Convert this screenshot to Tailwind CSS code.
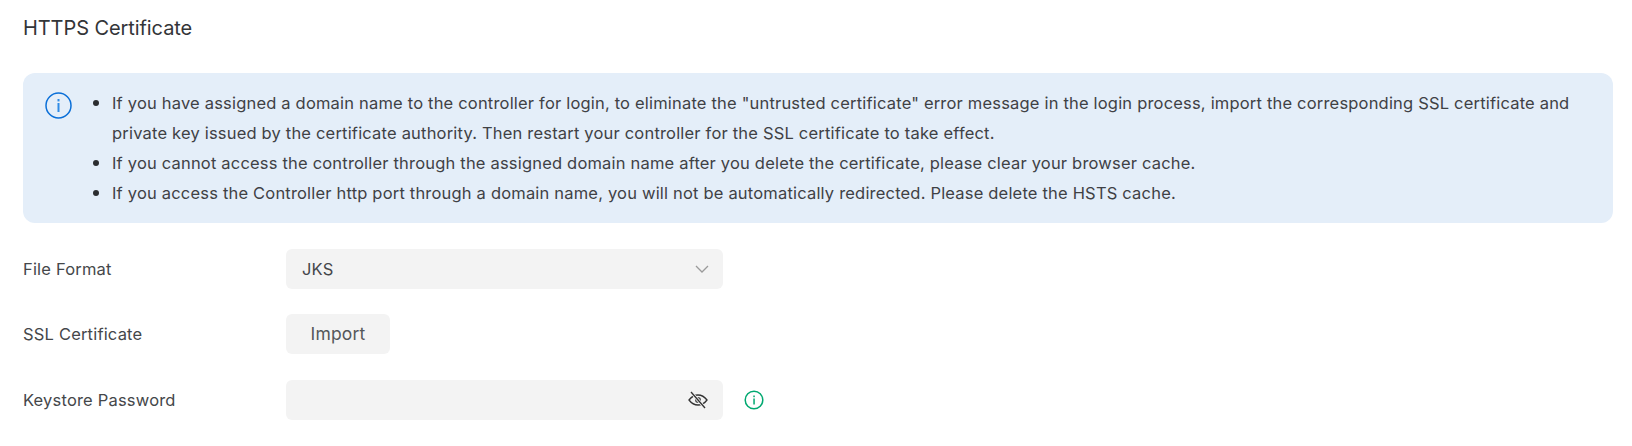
<!DOCTYPE html>
<html lang="en">
<head>
    <meta charset="UTF-8" />
    <title>HTTPS Certificate</title>
    <script src="https://cdn.jsdelivr.net/npm/@tailwindcss/browser@4"></script>
</head>
<body class="bg-white font-['Inter',sans-serif] text-[#45474a]">
    <div class="pl-[23px] pr-[19px]">
        <h2 class="h-[73px] pt-[14px] text-[20px] leading-[28px] font-normal text-[#333538] tracking-[-0.08px]">HTTPS Certificate</h2>

        <div class="flex h-[150px] rounded-[12px] bg-[#e4eef9] pt-[15px] pl-[22px]">
            <svg class="mt-[4px] shrink-0" width="27" height="27" viewBox="0 0 27 27" fill="none">
                <circle cx="13.500" cy="13.500" r="12.500" stroke="#0a6fd8" stroke-width="1.500"/>
                <rect x="12.500" y="7" width="2" height="2.400" fill="#2f8be6"/>
                <rect x="12.500" y="11" width="2" height="9" fill="#2f8be6"/>
            </svg>
            <ul class="ml-[40px] text-[16.5px] leading-[30px] tracking-[0.19px] text-[#3f4145]">
                <li class="relative before:absolute before:left-[-19px] before:top-[12px] before:size-[6px] before:rounded-full before:bg-[#2b2d30]">If you have assigned a domain name to the controller for login, to eliminate the "untrusted certificate" error message in the login process, import the corresponding SSL certificate and<br />private key issued by the certificate authority. Then restart your controller for the SSL certificate to take effect.</li>
                <li class="relative before:absolute before:left-[-19px] before:top-[12px] before:size-[6px] before:rounded-full before:bg-[#2b2d30]">If you cannot access the controller through the assigned domain name after you delete the certificate, please clear your browser cache.</li>
                <li class="relative before:absolute before:left-[-19px] before:top-[12px] before:size-[6px] before:rounded-full before:bg-[#2b2d30]">If you access the Controller http port through a domain name, you will not be automatically redirected. Please delete the HSTS cache.</li>
            </ul>
        </div>

        <div class="mt-[26px] flex flex-col text-[16.5px] tracking-[0.19px]">
            <div class="flex h-[40px] items-center">
                <label class="w-[263px]">File Format</label>
                <div class="flex h-[40px] w-[437px] items-center justify-between rounded-[6px] bg-[#f3f3f3] pl-[16px] pr-[14px]">
                    <span>JKS</span>
                    <svg width="14" height="8" viewBox="0 0 14 8" fill="none"><path d="M1 1l6 6 6-6" stroke="#9a9a9a" stroke-width="1.300"/></svg>
                </div>
            </div>
            <div class="mt-[25px] flex h-[40px] items-center">
                <label class="w-[263px]">SSL Certificate</label>
                <button class="h-[40px] w-[104px] rounded-[6px] bg-[#f3f3f3] text-[17.500px] text-[#55575a]">Import</button>
            </div>
            <div class="mt-[26px] flex h-[40px] items-center">
                <label class="w-[263px]">Keystore Password</label>
                <div class="flex h-[40px] w-[437px] items-center justify-end rounded-[6px] bg-[#f3f3f3] pr-[15px]">
                    <svg width="20" height="18" viewBox="0 0 20 18" fill="none">
                        <path d="M1 9c2.500-3.300 5.500-5 9-5s6.500 1.700 9 5c-2.500 3.300-5.500 5-9 5s-6.500-1.700-9-5z" stroke="#333" stroke-width="1.300"/>
                        <circle cx="10" cy="9" r="3" fill="#555"/>
                        <path d="M3 1l14 16" stroke="#f3f3f3" stroke-width="3"/>
                        <path d="M3 1l14 16" stroke="#333" stroke-width="1.300"/>
                    </svg>
                </div>
                <svg class="ml-[21px]" width="20" height="20" viewBox="0 0 20 20" fill="none">
                    <circle cx="10" cy="10" r="8.800" stroke="#00a870" stroke-width="1.500"/>
                    <rect x="9.300" y="5.500" width="1.500" height="1.700" fill="#00a870"/>
                    <rect x="9.300" y="8.500" width="1.500" height="6" fill="#00a870"/>
                </svg>
            </div>
        </div>
    </div>
</body>
</html>
